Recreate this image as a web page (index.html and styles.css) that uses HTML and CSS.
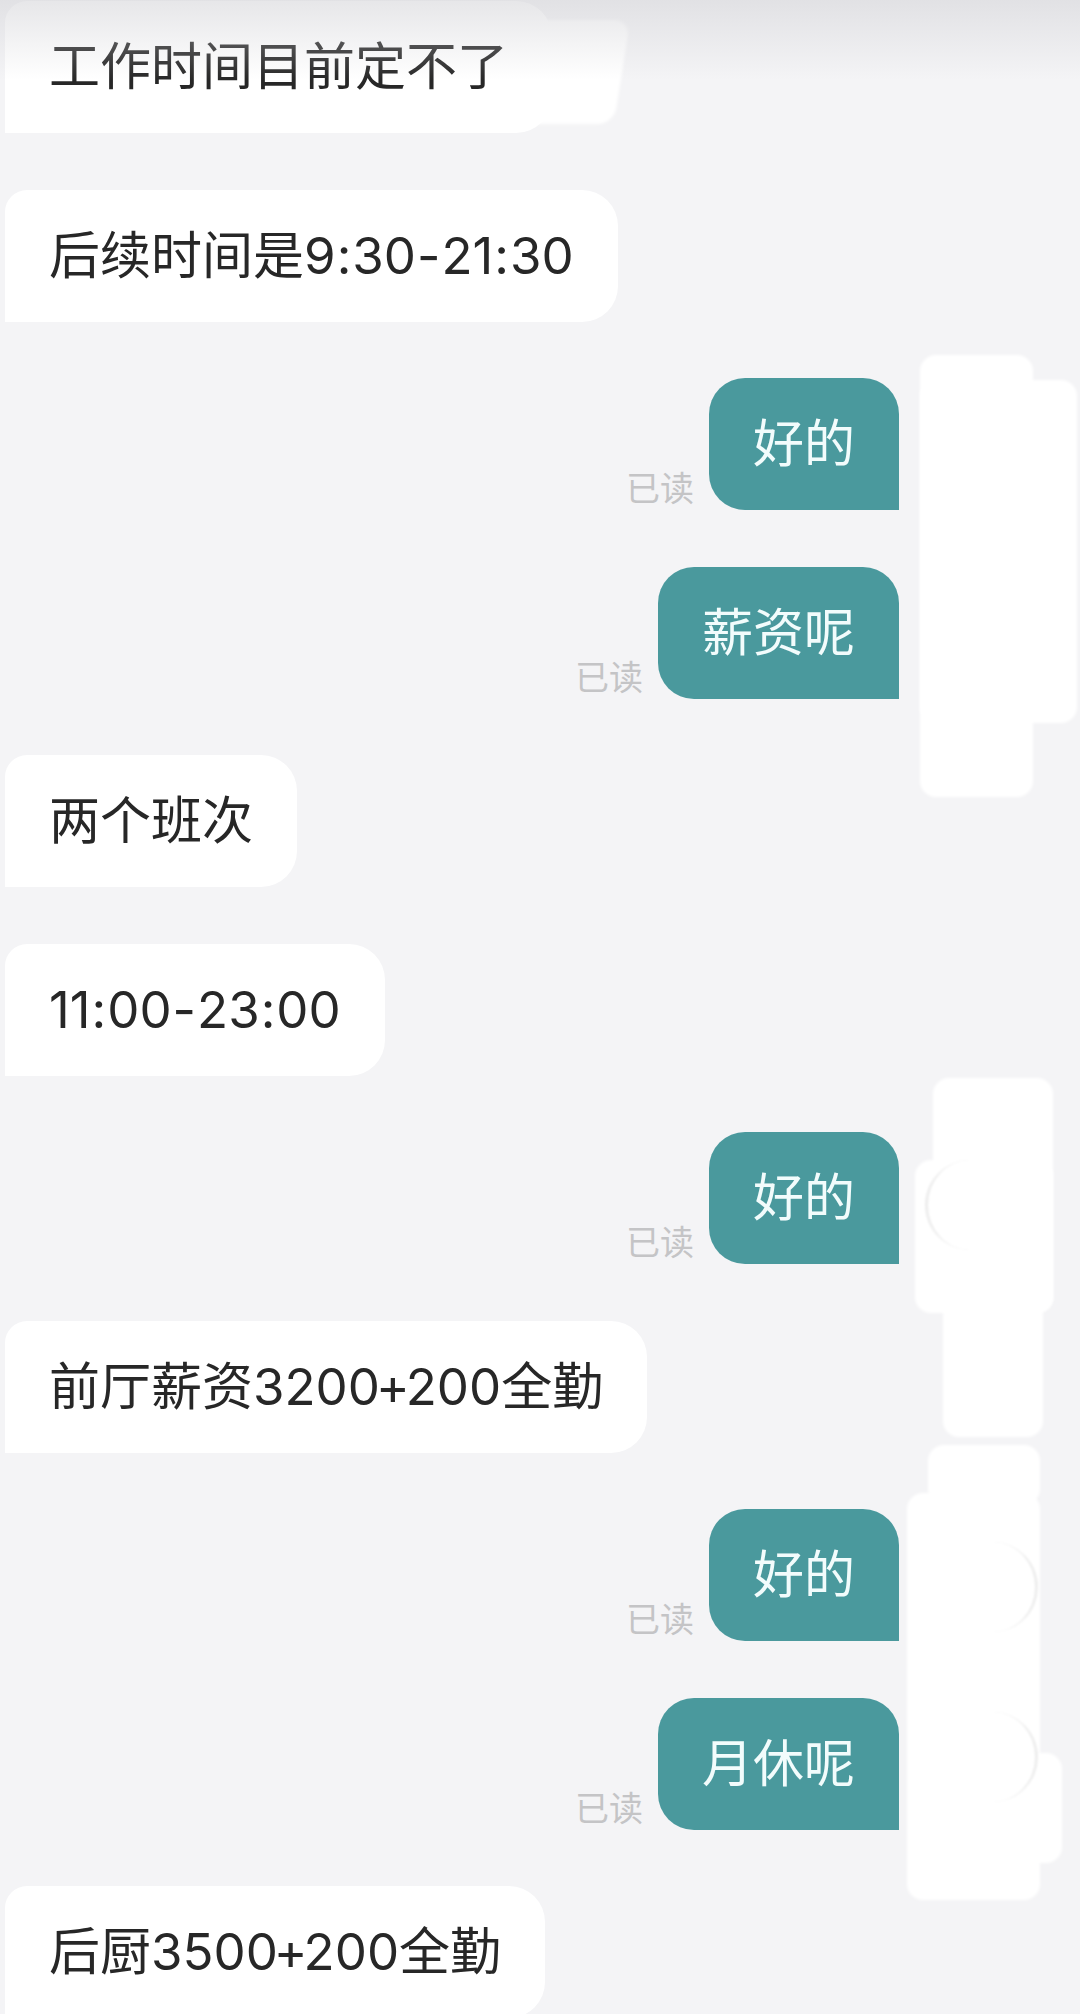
FILE: index.html
```html
<!DOCTYPE html>
<html lang="zh-CN">
<head>
	<meta charset="UTF-8">
	<title>聊天记录</title>
	<link rel="stylesheet" href="styles.css">
</head>
<body>
	<div class="screen">
		<div class="chat">
			<div class="row in"><div class="bubble">工作时间目前定不了</div></div>
			<div class="row in"><div class="bubble">后续时间是9<span class="sep">:</span>30<span class="sep">-</span>21<span class="sep">:</span>30</div></div>
			<div class="row out"><span class="read">已读</span><div class="bubble">好的</div></div>
			<div class="row out"><span class="read">已读</span><div class="bubble">薪资呢</div></div>
			<div class="row in"><div class="bubble">两个班次</div></div>
			<div class="row in"><div class="bubble">11<span class="sep">:</span>00<span class="sep">-</span>23<span class="sep">:</span>00</div></div>
			<div class="row out"><span class="read">已读</span><div class="bubble">好的</div></div>
			<div class="row in"><div class="bubble">前厅薪资3200<span class="plus">+</span>200全勤</div></div>
			<div class="row out"><span class="read">已读</span><div class="bubble">好的</div></div>
			<div class="row out"><span class="read">已读</span><div class="bubble">月休呢</div></div>
			<div class="row in"><div class="bubble">后厨3500<span class="plus">+</span>200全勤</div></div>
		</div>

		<!-- 打码的白块 -->
		<div class="smudge top"></div>
		<div class="smudge a1"></div>
		<div class="smudge a2"></div>
		<div class="smudge b1"></div>
		<div class="smudge b2"></div>
		<div class="smudge b3"></div>
		<div class="smudge c1"></div>
		<div class="smudge c2"></div>
		<div class="smudge c3"></div>
		<div class="ghost g1"></div>
		<div class="ghost g2"></div>
		<div class="ghost g3"></div>

		<div class="shade"></div>
	</div>
</body>
</html>
```

FILE: styles.css
```css
*{
	margin:0;
	padding:0;
	box-sizing:border-box;
}
body{
	background:#f4f4f6;
	font-family:Inter,"Noto Sans CJK SC",sans-serif;
}
.screen{
	position:relative;
	width:1080px;
	height:2014px;
	overflow:hidden;
}
.chat{
	display:flex;
	flex-direction:column;
	gap:56.5px;
	padding-top:1px;
}
.row{
	display:flex;
	align-items:flex-end;
}
.row.in{
	padding-left:5px;
}
.row.out{
	justify-content:flex-end;
	padding-right:181px;
	gap:15px;
}
.bubble{
	font-size:51px;
	line-height:66px;
	padding:33px 44px;
	color:#272727;
	background:#fff;
	white-space:nowrap;
}
.bubble .sep{
	margin:0 1px;
}
.bubble .plus{
	margin:0 -4px;
}
.in .bubble{
	border-radius:22px 36px 36px 0;
}
.out .bubble{
	background:#4a999d;
	color:#f2fcfc;
	border-radius:36px 36px 0 36px;
}
.read{
	font-size:34px;
	line-height:34px;
	color:#c4c4c6;
	margin-bottom:4px;
}

/* 白块 */
.smudge{
	position:absolute;
	background:#fff;
	border-radius:16px;
	filter:blur(1.5px);
}
.smudge.top{left:516px;top:20px;width:106px;height:104px;transform:skewX(-9deg);}
.smudge.a1{left:920px;top:355px;width:113px;height:442px;}
.smudge.a2{left:920px;top:380px;width:157px;height:343px;}
.smudge.b1{left:933px;top:1078px;width:120px;height:235px;}
.smudge.b2{left:915px;top:1160px;width:138px;height:153px;}
.smudge.b3{left:943px;top:1300px;width:100px;height:137px;}
.smudge.c1{left:928px;top:1445px;width:112px;height:60px;}
.smudge.c2{left:907px;top:1493px;width:133px;height:407px;}
.smudge.c3{left:913px;top:1753px;width:149px;height:110px;}
.ghost{
	position:absolute;
	width:90px;
	height:90px;
	border-radius:50%;
	border-right:3px solid rgba(0,0,0,0.07);
	filter:blur(1px);
}
.ghost.g1{left:925px;top:1160px;transform:scaleX(-1);}
.ghost.g2{left:948px;top:1542px;}
.ghost.g3{left:948px;top:1712px;}
.shade{
	position:absolute;
	left:0;
	top:0;
	width:100%;
	height:80px;
	background:linear-gradient(rgba(210,210,214,0.55),rgba(244,244,246,0));
}
```
